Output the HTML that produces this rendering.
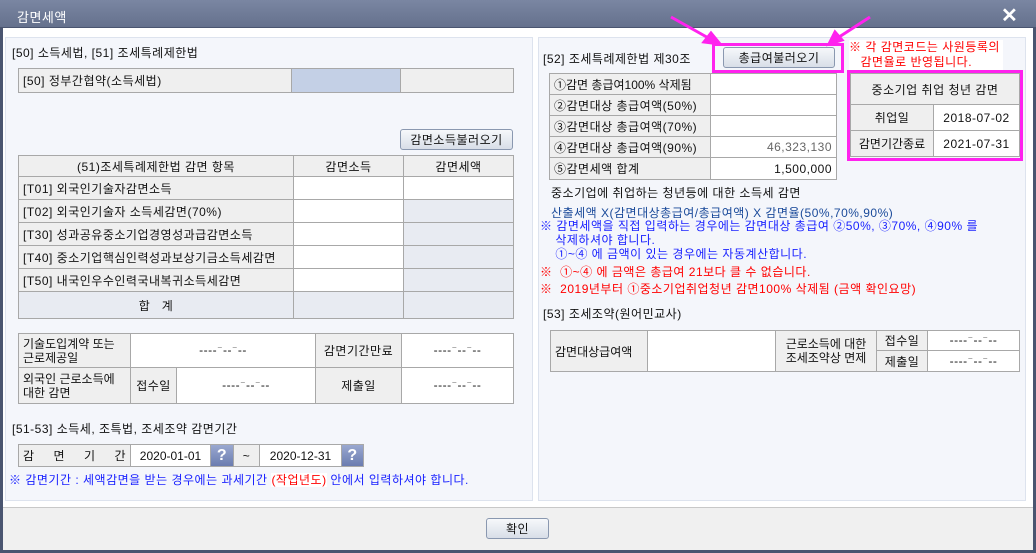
<!DOCTYPE html>
<html><head><meta charset="utf-8"><style>
*{margin:0;padding:0;box-sizing:border-box}
body{width:1036px;height:553px;overflow:hidden;background:#f0f0f0;font-family:"Liberation Sans","Noto Sans CJK KR","NanumGothic",sans-serif;font-size:12px;color:#111;position:relative;letter-spacing:0.5px}
.a{position:absolute;white-space:nowrap}
.c{position:absolute;border:1px solid #a8a8a8;display:flex;align-items:center;padding:0 4px;white-space:nowrap;overflow:hidden}
.g{background:#efefef}.w{background:#fff}.b{background:#c4d0e6}.l{background:#e8ebf2}
.ctr{justify-content:center;text-align:center}.r{justify-content:flex-end}
.btn{position:absolute;border:1px solid #8a98b0;border-radius:3px;background:linear-gradient(#f6f8fb,#d8dee8);display:flex;align-items:center;justify-content:center;font-size:12px}
.q{position:absolute;background:linear-gradient(#9aa8d0,#6a7cb0);color:#fff;font-weight:bold;font-size:16px;display:flex;align-items:center;justify-content:center;border:1px solid #a8a8a8}
.mg{position:absolute;border:3px solid #ff22ee}
</style></head><body>
<div class="a" style="left:0;top:0;width:1036px;height:28px;background:linear-gradient(#7a86a2,#65718d);border-bottom:1px solid #4a5570"></div>
<div class="a" style="left:17px;top:7px;color:#fff;font-size:13px">감면세액</div>
<div class="a" style="left:1001px;top:3px;color:#fff;font-size:20px;font-weight:bold">✕</div>
<div class="a" style="left:0;top:28px;width:3px;height:525px;background:#4a5570"></div>
<div class="a" style="left:1033px;top:28px;width:3px;height:525px;background:#4a5570"></div>
<div class="a" style="left:0;top:550px;width:1036px;height:3px;background:#4a5570"></div>
<div class="a" style="left:3px;top:28px;width:1030px;height:480px;background:#fff"></div>
<div class="a" style="left:5px;top:37px;width:528px;height:464px;background:#f4f6fb;border:1px solid #dde3ee"></div>
<div class="a" style="left:538px;top:37px;width:488px;height:464px;background:#f4f6fb;border:1px solid #dde3ee"></div>
<div class="a" style="left:3px;top:507px;width:1030px;height:1px;background:#c8c8c8"></div>

<div class="a" style="left:12px;top:44px">[50] 소득세법, [51] 조세특례제한법</div>
<div class="c g" style="left:18px;top:68px;width:274px;height:25px">[50] 정부간협약(소득세법)</div>
<div class="c b" style="left:291px;top:68px;width:110px;height:25px"></div>
<div class="c g" style="left:400px;top:68px;width:114px;height:25px"></div>
<div class="btn" style="left:400px;top:129px;width:113px;height:21px">감면소득불러오기</div>

<div class="c g ctr" style="left:18px;top:155px;width:276px;height:22px">(51)조세특례제한법 감면 항목</div>
<div class="c g ctr" style="left:293px;top:155px;width:111px;height:22px">감면소득</div>
<div class="c g ctr" style="left:403px;top:155px;width:111px;height:22px">감면세액</div>
<div class="c g" style="left:18px;top:176px;width:276px;height:24px">[T01] 외국인기술자감면소득</div><div class="c w" style="left:293px;top:176px;width:111px;height:24px"></div><div class="c w" style="left:403px;top:176px;width:111px;height:24px"></div>
<div class="c g" style="left:18px;top:199px;width:276px;height:24px">[T02] 외국인기술자 소득세감면(70%)</div><div class="c w" style="left:293px;top:199px;width:111px;height:24px"></div><div class="c l" style="left:403px;top:199px;width:111px;height:24px"></div>
<div class="c g" style="left:18px;top:222px;width:276px;height:24px">[T30] 성과공유중소기업경영성과급감면소득</div><div class="c w" style="left:293px;top:222px;width:111px;height:24px"></div><div class="c l" style="left:403px;top:222px;width:111px;height:24px"></div>
<div class="c g" style="left:18px;top:245px;width:276px;height:24px">[T40] 중소기업핵심인력성과보상기금소득세감면</div><div class="c w" style="left:293px;top:245px;width:111px;height:24px"></div><div class="c l" style="left:403px;top:245px;width:111px;height:24px"></div>
<div class="c g" style="left:18px;top:268px;width:276px;height:24px">[T50] 내국인우수인력국내복귀소득세감면</div><div class="c w" style="left:293px;top:268px;width:111px;height:24px"></div><div class="c l" style="left:403px;top:268px;width:111px;height:24px"></div>
<div class="c l ctr" style="left:18px;top:291px;width:276px;height:28px">합 &nbsp; 계</div><div class="c l" style="left:293px;top:291px;width:111px;height:28px"></div><div class="c l" style="left:403px;top:291px;width:111px;height:28px"></div>

<div class="c g" style="left:18px;top:333px;width:113px;height:35px;line-height:14px;white-space:normal;letter-spacing:0">기술도입계약 또는 근로제공일</div>
<div class="c w ctr" style="left:130px;top:333px;width:186px;height:35px">----⁻--⁻--</div>
<div class="c g ctr" style="left:315px;top:333px;width:87px;height:35px">감면기간만료</div>
<div class="c w ctr" style="left:401px;top:333px;width:113px;height:35px">----⁻--⁻--</div>
<div class="c g" style="left:18px;top:367px;width:113px;height:37px;line-height:14px;white-space:normal;letter-spacing:0">외국인 근로소득에 대한 감면</div>
<div class="c g ctr" style="left:130px;top:367px;width:47px;height:37px">접수일</div>
<div class="c w ctr" style="left:176px;top:367px;width:140px;height:37px">----⁻--⁻--</div>
<div class="c g ctr" style="left:315px;top:367px;width:87px;height:37px">제출일</div>
<div class="c w ctr" style="left:401px;top:367px;width:113px;height:37px">----⁻--⁻--</div>

<div class="a" style="left:12px;top:420px">[51-53] 소득세, 조특법, 조세조약 감면기간</div>
<div class="c g" style="left:18px;top:444px;width:113px;height:23px;justify-content:space-between"><span>감</span><span>면</span><span>기</span><span>간</span></div>
<div class="c w ctr" style="left:130px;top:444px;width:81px;height:23px;letter-spacing:0">2020-01-01</div>
<div class="q" style="left:210px;top:444px;width:24px;height:23px">?</div>
<div class="c g ctr" style="left:233px;top:444px;width:27px;height:23px">~</div>
<div class="c w ctr" style="left:259px;top:444px;width:83px;height:23px;letter-spacing:0">2020-12-31</div>
<div class="q" style="left:341px;top:444px;width:23px;height:23px">?</div>
<div class="a" style="left:9px;top:471px;color:#1a22ff">※ 감면기간 : 세액감면을 받는 경우에는 과세기간 <span style="color:#f00;background:#fff">(작업년도)</span> 안에서 입력하셔야 합니다.</div>

<div class="btn" style="left:486px;top:518px;width:63px;height:21px">확인</div>

<div class="a" style="left:543px;top:50px">[52] 조세특례제한법 제30조</div>
<div class="btn" style="left:723px;top:47px;width:112px;height:21px">총급여불러오기</div>
<div class="mg" style="left:712px;top:43px;width:132px;height:30px"></div>
<svg class="a" style="left:0;top:0" width="1036" height="80"><g stroke="#ff22ee" stroke-width="3" fill="#ff22ee"><line x1="671" y1="17" x2="712" y2="40"/><polygon points="720,44 704,42 711,33"/><line x1="870" y1="17" x2="836" y2="39"/><polygon points="829,44 835,32 842,40"/></g></svg>
<div class="a" style="left:849px;top:40px;color:#f00;line-height:15px;background:#fff;padding-right:3px">※ 각 감면코드는 사원등록의<br>&nbsp;&nbsp;&nbsp;감면율로 반영됩니다.</div>
<div class="mg" style="left:847px;top:70px;width:176px;height:91px"></div>
<div class="c g ctr" style="left:850px;top:73px;width:170px;height:32px">중소기업 취업 청년 감면</div>
<div class="c g ctr" style="left:850px;top:104px;width:84px;height:27px">취업일</div>
<div class="c w ctr" style="left:933px;top:104px;width:87px;height:27px">2018-07-02</div>
<div class="c g ctr" style="left:850px;top:130px;width:84px;height:27px;letter-spacing:0">감면기간종료</div>
<div class="c w ctr" style="left:933px;top:130px;width:87px;height:27px">2021-07-31</div>

<div class="c g" style="left:549px;top:73px;width:162px;height:22px;letter-spacing:0">①감면 총급여100% 삭제됨</div><div class="c w" style="left:710px;top:73px;width:127px;height:22px"></div>
<div class="c g" style="left:549px;top:94px;width:162px;height:22px">②감면대상 총급여액(50%)</div><div class="c w" style="left:710px;top:94px;width:127px;height:22px"></div>
<div class="c g" style="left:549px;top:115px;width:162px;height:22px">③감면대상 총급여액(70%)</div><div class="c w" style="left:710px;top:115px;width:127px;height:22px"></div>
<div class="c g" style="left:549px;top:136px;width:162px;height:22px">④감면대상 총급여액(90%)</div><div class="c w r" style="left:710px;top:136px;width:127px;height:22px;color:#666">46,323,130</div>
<div class="c g" style="left:549px;top:157px;width:162px;height:23px">⑤감면세액 합계</div><div class="c w r" style="left:710px;top:157px;width:127px;height:23px">1,500,000</div>

<div class="a" style="left:551px;top:184px">중소기업에 취업하는 청년등에 대한 소득세 감면</div>
<div class="a" style="left:551px;top:204px;color:#1a4a9a">산출세액 X(감면대상총급여/총급여액) X 감면율(50%,70%,90%)</div>
<div class="a" style="left:540px;top:219px;color:#1a22ff;line-height:14px">※ 감면세액을 직접 입력하는 경우에는 감면대상 총급여 ②50%, ③70%, ④90% 를<br>&nbsp;&nbsp;&nbsp;&nbsp;삭제하셔야 합니다.<br>&nbsp;&nbsp;&nbsp;&nbsp;①~④ 에 금액이 있는 경우에는 자동계산합니다.</div>
<div class="a" style="left:540px;top:263px;color:#f00">※ &nbsp;①~④ 에 금액은 총급여 21보다 클 수 없습니다.</div>
<div class="a" style="left:540px;top:280px;color:#f00">※ &nbsp;2019년부터 ①중소기업취업청년 감면100% 삭제됨 (금액 확인요망)</div>

<div class="a" style="left:543px;top:305px">[53] 조세조약(원어민교사)</div>
<div class="c g" style="left:550px;top:330px;width:98px;height:42px;letter-spacing:0">감면대상급여액</div>
<div class="c w" style="left:647px;top:330px;width:129px;height:42px"></div>
<div class="c g" style="left:775px;top:330px;width:102px;height:42px;line-height:14px;white-space:normal;text-align:center;letter-spacing:0">근로소득에 대한 조세조약상 면제</div>
<div class="c g ctr" style="left:876px;top:330px;width:52px;height:21px">접수일</div>
<div class="c w ctr" style="left:927px;top:330px;width:93px;height:21px">----⁻--⁻--</div>
<div class="c g ctr" style="left:876px;top:350px;width:52px;height:22px">제출일</div>
<div class="c w ctr" style="left:927px;top:350px;width:93px;height:22px">----⁻--⁻--</div>
</body></html>
